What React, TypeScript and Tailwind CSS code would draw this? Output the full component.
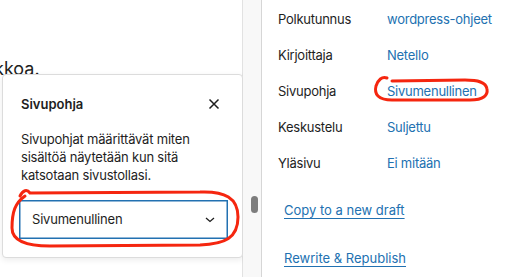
import React from "react";

const rows: [string, string][] = [
  ["Polkutunnus", "wordpress-ohjeet"],
  ["Kirjoittaja", "Netello"],
  ["Sivupohja", "Sivumenullinen"],
  ["Keskustelu", "Suljettu"],
  ["Yläsivu", "Ei mitään"],
];

export default function App() {
  return (
    <div
      className="relative flex h-[277px] w-[524px] overflow-hidden bg-white text-[#1e1e1e]"
      style={{ fontFamily: "Inter, 'Noto Sans', sans-serif" }}
    >
      {/* main editor area */}
      <div className="relative w-[243px] shrink-0 border-r border-[#e2e2e2]">
        <div className="ml-[-6px] pt-[57px] text-[18px] leading-[24px] text-[#1e1e1e]">kkoa.</div>

        {/* popover */}
        <div className="absolute left-[2px] top-[74px] h-[184px] w-[241px] rounded-[4px] border border-[#dcdcdc] bg-white shadow-[0_2px_6px_rgba(0,0,0,0.08)]">
          <div className="flex items-center justify-between pl-[18px] pr-[22px] pt-[19px]">
            <span className="text-[13px] font-semibold leading-[20px]">Sivupohja</span>
            <svg width="12" height="12" viewBox="0 0 12 12">
              <path d="M1.5 1.5 L10.5 10.5 M10.5 1.5 L1.5 10.5" stroke="#1e1e1e" strokeWidth="1.5" />
            </svg>
          </div>
          <p className="mt-[16px] pl-[18px] pr-[16px] text-[13px] leading-[18px] tracking-[-0.2px]">
            Sivupohjat määrittävät miten sisältöä näytetään kun sitä katsotaan sivustollasi.
          </p>
          <div className="ml-[16px] mt-[16px] flex h-[39px] w-[209px] items-center justify-between border border-[#2271b1] pl-[12px] pr-[12px] shadow-[inset_0_0_0_0.5px_#2271b1]">
            <span className="text-[13px] tracking-[-0.2px]">Sivumenullinen</span>
            <svg width="10" height="6" viewBox="0 0 10 6">
              <path d="M1 1 L5 4.5 L9 1" stroke="#1e1e1e" strokeWidth="1.3" fill="none" />
            </svg>
          </div>
        </div>
      </div>

      {/* scrollbar track */}
      <div className="relative w-[19px] shrink-0 border-r border-[#d6d6d6] bg-[#f8f8f8]">
        <div className="absolute left-[8px] top-[196px] h-[17px] w-[7px] rounded-full bg-[#7d7d7d]" />
      </div>

      {/* sidebar */}
      <div className="flex-1 pl-[16px] pt-[2px]">
        {rows.map(([label, value]) => (
          <div key={label} className="flex h-[36px] items-center text-[13px] tracking-[-0.25px]">
            <span className="w-[109px] shrink-0 text-[#1e1e1e]">{label}</span>
            <span className="text-[#2271b1]">{value}</span>
          </div>
        ))}
        <div className="mt-[19px] pl-[6px] text-[13px] leading-[18px] text-[#2271b1]">
          <div className="underline underline-offset-[3px]">Copy to a new draft</div>
          <div className="mt-[30px] underline underline-offset-[3px]">Rewrite &amp; Republish</div>
        </div>
      </div>

      {/* red annotations */}
      <svg
        className="pointer-events-none absolute left-0 top-0"
        width="524"
        height="277"
        viewBox="0 0 524 277"
      >
        <path
          d="M20 196 C 23 190, 27 189, 30 193 L 200 192 C 225 191, 238 198, 238 217 C 238 238, 225 244, 200 245 L 50 246 C 25 246, 12 240, 12 228 C 12 212, 15 203, 25 196"
          stroke="#f5260f"
          strokeWidth="3"
          fill="none"
          strokeLinecap="round"
        />
        <path
          d="M387 78 C 382 76, 378 80, 376 86 C 374 94, 378 100, 392 100 L 470 100 C 484 100, 488 95, 487 89 C 486 82, 478 80, 465 80 L 392 81"
          stroke="#f5260f"
          strokeWidth="3"
          fill="none"
          strokeLinecap="round"
        />
      </svg>
    </div>
  );
}
